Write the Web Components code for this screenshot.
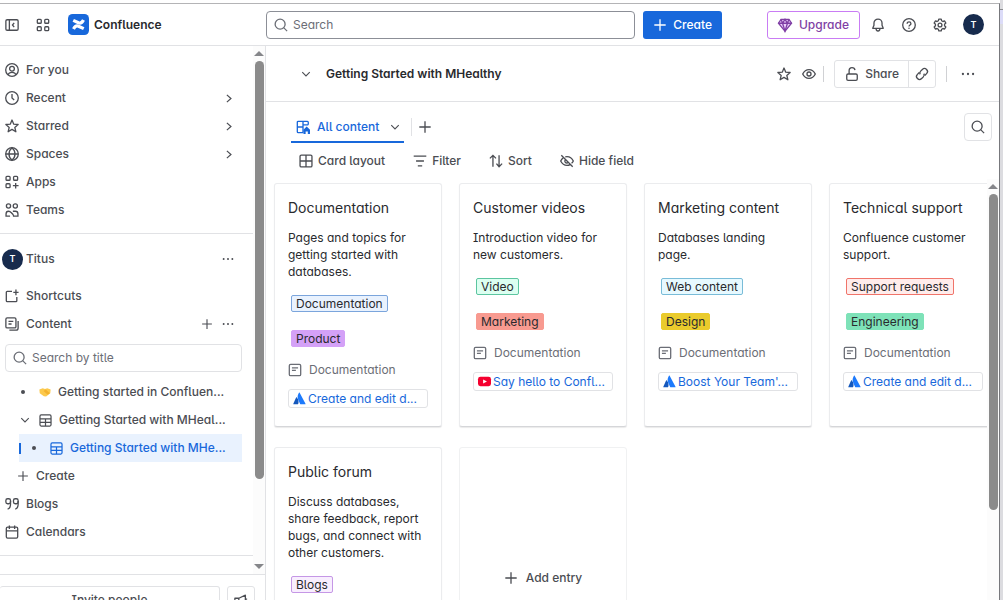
<!DOCTYPE html>
<html lang="en">
<head>
<meta charset="utf-8">
<meta name="viewport" content="width=device-width, initial-scale=1">
<title>Getting Started with MHealthy - Confluence</title>
<style>
  html, body { height: 100%; margin: 0; }
  body {
    --text: #292a2e;
    --subtle: #4b4d53;
    --subtlest: #6b6e76;
    --line: #e1e2e5;
    --brand: #1868db;
    --navy: #172b4d;
    font: 12px/20px Inter, "Noto Sans", sans-serif;
    font-feature-settings: "cv11", "cv08", "cv05";
    color: var(--text);
    background: #fff;
    overflow: hidden;
  }
</style>
</head>
<body>
<app-window></app-window>

<script>
const ICONS = {
  panel: '<rect x="1" y="2" width="14" height="12" rx="1.5"/><path d="M5 2v12M10.500 5.500 8.500 8l2 2.500"/>',
  grid: '<rect x="1.500" y="1.500" width="4.500" height="4.500" rx="1"/><rect x="10" y="1.500" width="4.500" height="4.500" rx="1"/><rect x="1.500" y="10" width="4.500" height="4.500" rx="1"/><rect x="10" y="10" width="4.500" height="4.500" rx="1"/>',
  person: '<circle cx="8" cy="8" r="7.200"/><circle cx="8" cy="6.500" r="2.700"/><path d="M3.500 13.500c.6-2 2-2.800 4.500-2.800s3.900.8 4.500 2.800"/>',
  clock: '<circle cx="8" cy="8" r="7.200"/><path d="M8 3.500V8l2.500 2.200"/>',
  star: '<path d="m8 1.200 2 4.700 5 .4-3.800 3.300 1.200 5L8 11.900l-4.400 2.700 1.200-5L1 6.300l5-.4z" stroke-linejoin="round"/>',
  globe: '<circle cx="8" cy="8" r="7.200"/><path d="M.8 8h14.400M8 .8c-4.600 4-4.600 10.400 0 14.400 4.600-4 4.600-10.400 0-14.400z"/>',
  apps: '<rect x="1.200" y="1.500" width="4.600" height="4.500" rx="1"/><rect x="9.800" y="1.500" width="4.600" height="4.500" rx="1"/><rect x="1.200" y="10" width="4.600" height="4.500" rx="1"/><path d="M12.200 9v6.500M9 12.200h6.500"/>',
  teams: '<circle cx="4" cy="3.400" r="2.400"/><circle cx="11.800" cy="3.400" r="2.400"/><path d="M5.800 15H1.200v-2.500c0-1.900 1.100-3.100 2.900-3.100 1.300 0 2.100.5 2.900 1.500l2.200 2.300c.4.500.6.900.6 1.800h5v-2.500c0-1.900-1.100-3.100-2.900-3.100H9"/>',
  right: '<path d="m6 3.500 5 4.500-5 4.500"/>',
  down: '<path d="m3 5.500 5 5 5-5"/>',
  dots: '<g fill="currentColor" stroke="none"><circle cx="2.200" cy="8" r="1.300"/><circle cx="8" cy="8" r="1.300"/><circle cx="13.800" cy="8" r="1.300"/></g>',
  plus: '<path d="M8 1.500v13M1.500 8h13"/>',
  shortcut: '<path d="M8 2.800H2.500a1 1 0 0 0-1 1v9.700a1 1 0 0 0 1 1h10a1 1 0 0 0 1-1V9M12.500.5v6.500M9.500 3.800h6"/>',
  content: '<rect x="1" y="1" width="11.500" height="11.500" rx="1.500"/><path d="M4 5h5.500M4 8h3.500M15 4.500v8c0 1.500-.9 2.500-2.500 2.500H5"/>',
  search: '<circle cx="7" cy="7" r="5.700"/><path d="m11 11 4 4"/>',
  table: '<rect x="1.200" y="1.200" width="13.600" height="13.600" rx="1.500"/><path d="M1.200 6h13.600M1.200 10.400h13.600M8 6v8.800"/>',
  quote: '<path d="M6.300 4.500v3.700c0 3.200-1.200 5-3.300 5.700M15 4.500v3.700c0 3.200-1.200 5-3.300 5.700"/><rect x="1" y="2" width="5.300" height="5.700" rx="2"/><rect x="9.700" y="2" width="5.300" height="5.700" rx="2"/>',
  calendar: '<rect x="1.500" y="2.500" width="13" height="12.500" rx="1.500"/><path d="M1.500 6.800h13M5 .5v4M11 .5v4"/>',
  bell: '<path d="M8 1.200a4.600 4.600 0 0 0-4.600 4.600v2.400L2 11.800h12l-1.400-3.600V5.800A4.600 4.600 0 0 0 8 1.200zM5.800 12c0 3.800 4.400 3.800 4.400 0" stroke-linejoin="round"/>',
  help: '<circle cx="8" cy="8" r="7.200"/><path d="M5.900 6.600c0-2.900 4.300-2.700 4.300-.1C10.200 8 8 8 8 9.700"/><circle cx="8" cy="11.800" r=".9" fill="currentColor" stroke="none"/>',
  gear: '<path d="M6.600 1.200h2.800l.5 2 1.400.8 2-.6 1.400 2.400-1.500 1.400v1.600l1.500 1.400-1.400 2.400-2-.6-1.400.8-.5 2H6.600l-.5-2-1.400-.8-2 .6-1.400-2.400 1.500-1.400V7.200L1.300 5.800l1.400-2.400 2 .6 1.400-.8z" stroke-linejoin="round"/><circle cx="8" cy="8" r="2.200"/>',
  eye: '<path d="M.8 8C2.500 4.500 5 3 8 3s5.500 1.500 7.200 5C13.500 11.500 11 13 8 13S2.500 11.500.8 8z"/><circle cx="8" cy="8" r="2.300"/>',
  unlock: '<rect x="2" y="8" width="12" height="7.200" rx="1.500"/><path d="M4.700 8V4.200C4.700 2 6 .8 8 .8s3.200 1 3.400 2.700"/>',
  link: '<g transform="rotate(-45 8 8)"><path d="M7 4.600H4a3.400 3.400 0 0 0 0 6.800h2.800c1.500 0 2.500-.9 3-2.200M9 11.400h3a3.400 3.400 0 0 0 0-6.800H9.200c-1.500 0-2.500.9-3 2.200"/></g>',
  view: '<path d="M8 14.500H2.500a1 1 0 0 1-1-1v-11a1 1 0 0 1 1-1h10.500a1 1 0 0 1 1 1V5.500M1.500 8H8M8 1.500v13M8 5.500h6"/><path d="M8.500 11.200 12.200 7.500 16 11.200V16h-2.500v-3h-2.500v3H8.500z" fill="currentColor" stroke="none"/>',
  layout: '<rect x="1.200" y="1.200" width="13.600" height="13.600" rx="1.500"/><path d="M1.200 8h13.600M8 1.200v13.600"/>',
  filter: '<path d="M.8 2.500h14.400M3.500 8h9M5.500 13.500h5"/>',
  sort: '<path d="M4.500 14.500v-13M1 5l3.500-3.500L8 5M11.500 1.500v13M8.500 11l3 3.500 3.500-3.500"/>',
  hide: '<path d="M1.500 1.500l13 13M3.500 4.500C2.300 5.400 1.500 6.600.8 8c1.700 3.500 4.200 5 7.200 5 1.300 0 2.500-.3 3.500-.9M6 3.200C11 2.300 13.800 5 15.200 8c-.5 1-1.200 2-2 2.700M5.800 6.800c-1 2.500 1 4 3 3.300"/>',
  page: '<rect x="1.500" y="1.500" width="13" height="13" rx="1.500"/><path d="M4.500 5.500h7M4.500 8.500h4.500"/>',
  mega: '<path d="M1 6h4.500L13 2.500v12L5.500 11H1zM5.500 6v9.500M13 7h2" stroke-linejoin="round"/>',
  gem: '<path d="M3.500 1.500h9L15.500 6 8 15 .5 6z" fill="#c97cf4" fill-opacity=".35"/><path d="M.5 6h15M3.500 1.500 5.200 6 8 15l2.800-9 1.700-4.500M5.200 6 8 1.500 10.800 6"/>',
  confluence: '<rect width="16" height="16" rx="3.500" fill="#1868db" stroke="none"/><g fill="none" stroke="#fff" stroke-width="2.400"><path d="M4.200 11.400C5.200 9.400 6.200 8.600 8 9.300l4 1.900"/><path d="M11.800 4.600C10.800 6.600 9.800 7.400 8 6.700L4 4.800"/></g>',
  hands: '<g stroke="none"><path d="M.5 4.500 5 3l3 1 3-1 4.500 1.500-.5 5L9.500 14 6.500 13.500 1 9.500z" fill="#fcc94c"/><path d="m6 6.500 3-2 5.500 5-3 2z" fill="#f3b22e"/></g>',
  atlassian: '<g stroke="none"><path d="M4.700 6.800c-.3-.4-.7-.3-.9.100L.4 14.400c-.2.400 0 .7.400.7h4.900c.3 0 .6-.1.700-.4 1.100-2.300.3-6-1.700-7.900z" fill="#1558bc"/><path d="M7.300.9C4.900 4.500 5.400 7.800 6.800 10.600l2 4.100c.2.300.4.400.7.400h5.500c.4 0 .6-.3.400-.7L8.200 1c-.2-.4-.6-.5-.9-.1z" fill="#1d7afc"/></g>',
  youtube: '<rect x="0" y="2.200" width="16" height="11.600" rx="3" fill="#f5002f" stroke="none"/><path d="M6.300 5.400v5.200L11 8z" fill="#fff" stroke="none"/>',
};

/* Registers an element whose shadow root is built from its attributes. */
function component(tag, css, html) {
  customElements.define(tag, class extends HTMLElement {
    constructor() {
      super();
      this.attachShadow({ mode: 'open' });
    }
    connectedCallback() {
      const template = document.createElement('template');
      const body = typeof html === 'function' ? html(this) : html;
      template.innerHTML = `<style>*{box-sizing:border-box}button,input{font:inherit;font-feature-settings:inherit;color:inherit}${css}</style>${body}`;
      this.shadowRoot.replaceChildren(template.content.cloneNode(true));
    }
  });
}
const attr = (el, name) => el.getAttribute(name) || '';

component('ui-icon',
  `:host{display:inline-flex;flex:none;width:var(--icon-size,14px);height:var(--icon-size,14px)}
   svg{width:100%;height:100%;overflow:visible}`,
  el => `<svg viewBox="0 0 16 16" fill="none" stroke="currentColor" stroke-width="1.5" aria-hidden="true">${ICONS[attr(el, 'name')]}</svg>`);

component('icon-button',
  `:host{display:inline-flex;flex:none}
   button{display:grid;place-items:center;width:24px;height:24px;padding:0;border:0;background:none;color:inherit;border-radius:3px}`,
  el => `<button type="button" aria-label="${attr(el, 'label')}"><ui-icon name="${attr(el, 'icon')}"></ui-icon></button>`);

component('user-avatar',
  `:host{display:grid;place-items:center;flex:none;width:21px;height:21px;border-radius:50%;background:var(--navy);color:#fff;font-size:9px;font-weight:600;line-height:12px}`,
  `<slot></slot>`);

component('search-field',
  `:host{display:block;color:var(--subtlest)}
   label{display:flex;align-items:center;gap:5px;height:28px;padding:0 7px;border:1px solid var(--field-line,var(--line));border-radius:4px;background:#fff}
   input{flex:1;min-width:0;padding:0;border:0;outline:0;background:none}
   input::placeholder{color:var(--subtlest);opacity:1}`,
  el => `<label><ui-icon name="search"></ui-icon><input type="search" aria-label="${attr(el, 'label')}" placeholder="${attr(el, 'label')}"></label>`);

component('scroll-rail',
  `:host{display:flex;flex-direction:column;align-items:center;flex:none;width:12px;padding:5px 0;background:#fcfcfc}
   i{border:5px solid transparent;border-top:0;border-bottom:5px solid #85868a}
   i.end{border-bottom:0;border-top:5px solid #85868a}
   div{flex:1;width:9px;margin:5px 0}
   span{display:block;height:var(--thumb,84%);border-radius:5px;background:#8b8b8b}`,
  `<i></i><div><span></span></div><i class="end"></i>`);

component('app-header',
  `:host{display:flex;align-items:center;flex:none;height:42px;border-bottom:1px solid var(--line);color:var(--subtle)}
   .brand{display:flex;align-items:center;width:266px;flex:none}
   .brand icon-button{margin-right:7px}
   .logo{display:flex;align-items:center;gap:5px;margin-left:6px;color:var(--text);font-weight:600;text-decoration:none;--icon-size:21px}
   search-field{flex:1;--field-line:#8c8f97}
   button{display:flex;align-items:center;gap:6px;height:28px;padding:0 10px;border:0;border-radius:3px;font-weight:500}
   .create{margin:0 45px 0 8px;background:var(--brand);color:#fff}
   .upgrade{gap:7px;border:1px solid #c97cf4;background:#fff;color:#803fa5}
   .tools{display:flex;align-items:center;gap:7px;margin:0 15px 0 6px}
   user-avatar{margin-left:4px}`,
  `<div class="brand"><icon-button icon="panel" label="Collapse sidebar"></icon-button><icon-button icon="grid" label="Switch sites"></icon-button>
     <a class="logo" href="#home"><ui-icon name="confluence"></ui-icon>Confluence</a></div>
   <search-field label="Search"></search-field>
   <button class="create" type="button"><ui-icon name="plus"></ui-icon>Create</button>
   <button class="upgrade" type="button"><ui-icon name="gem"></ui-icon>Upgrade</button>
   <div class="tools"><icon-button icon="bell" label="Notifications"></icon-button><icon-button icon="help" label="Help"></icon-button><icon-button icon="gear" label="Settings"></icon-button><user-avatar>T</user-avatar></div>`);

component('nav-item',
  `:host{display:flex;align-items:center;height:28px;padding:0 13px 0 5px;font-weight:500}
   a{display:flex;align-items:center;gap:7px;flex:1;min-width:0;color:inherit;text-decoration:none;white-space:nowrap}
   .more{--icon-size:13px;margin-right:5px}
   slot[name=lead]{display:contents}`,
  el => `<a href="#${attr(el, 'icon')}"><slot name="lead">${el.hasAttribute('icon') ? `<ui-icon name="${attr(el, 'icon')}"></ui-icon>` : ''}</slot><slot></slot></a>
   ${el.hasAttribute('expandable') ? '<ui-icon class="more" name="right"></ui-icon>' : ''}<slot name="actions"></slot>`);

component('tree-item',
  `:host{display:block;padding:0 11px 0 19px;font-weight:500}
   a{display:flex;align-items:center;height:28px;color:inherit;text-decoration:none;white-space:nowrap}
   .mark{display:grid;place-items:center;flex:none;width:8px;--icon-size:12px}
   .bullet{width:4px;height:4px;border-radius:50%;background:var(--subtle)}
   .icon{margin:0 7px 0 12px;--icon-size:13px}
   .bar{flex:none;width:2px;height:11px;background:var(--brand)}
   :host([current]) a{background:#e9f2fe;color:var(--brand)}
   :host([current]) .mark{margin-left:9px}
   :host([leaf]) .icon{--icon-size:12px}`,
  el => `<a href="#page">${el.hasAttribute('current') ? '<span class="bar"></span>' : ''}<span class="mark">${el.hasAttribute('open') ? '<ui-icon name="down"></ui-icon>' : '<span class="bullet"></span>'}</span><ui-icon class="icon" name="${attr(el, 'icon')}"></ui-icon><slot></slot></a>`);

component('side-nav',
  `:host{display:flex;flex-direction:column;flex:none;width:266px;border-right:1px solid var(--line);color:var(--subtle)}
   .scroll{display:flex;flex:1;min-height:0}
   nav{flex:1;min-width:0;padding-top:10px;overflow:hidden}
   hr{height:1px;margin:9px 0 11px;border:0;background:var(--line)}
   .space{margin-bottom:9px}
   .space user-avatar{margin:0 -4px 0 -3px}
   search-field{margin:6px 11px 6px 5px}
   .actions{display:flex;--icon-size:12px}
   .actions icon-button{margin-left:-3px}
   .create{padding-left:17px;--icon-size:12px}
   footer{display:flex;gap:7px;height:26px;flex:none;padding:11px 10px 0 0;border-top:1px solid var(--line);overflow:hidden}
   footer button{display:grid;place-items:center;height:28px;flex:none;padding:0;border:1px solid var(--line);border-radius:3px;background:#fff;font-weight:500}
   footer button:first-child{flex:1;border-left:0}
   footer button:last-child{width:28px}`,
  `<div class="scroll"><nav aria-label="Space">
     <nav-item icon="person">For you</nav-item>
     <nav-item icon="clock" expandable>Recent</nav-item>
     <nav-item icon="star" expandable>Starred</nav-item>
     <nav-item icon="globe" expandable>Spaces</nav-item>
     <nav-item icon="apps">Apps</nav-item>
     <nav-item icon="teams">Teams</nav-item>
     <hr>
     <nav-item class="space"><user-avatar slot="lead">T</user-avatar>Titus<span slot="actions" class="actions"><icon-button icon="dots" label="Space actions"></icon-button></span></nav-item>
     <nav-item icon="shortcut">Shortcuts</nav-item>
     <nav-item icon="content">Content<span slot="actions" class="actions"><icon-button icon="plus" label="Add content"></icon-button><icon-button icon="dots" label="Content actions"></icon-button></span></nav-item>
     <search-field label="Search by title"></search-field>
     <tree-item icon="hands" leaf>Getting started in Confluen...</tree-item>
     <tree-item icon="table" open>Getting Started with MHeal...</tree-item>
     <tree-item icon="table" current>Getting Started with MHe...</tree-item>
     <nav-item class="create"><ui-icon slot="lead" name="plus"></ui-icon>Create</nav-item>
     <nav-item icon="quote">Blogs</nav-item>
     <nav-item icon="calendar">Calendars</nav-item>
     <hr>
     <nav-item icon="table"></nav-item>
   </nav><scroll-rail></scroll-rail></div>
   <footer><button type="button">Invite people</button><button type="button" aria-label="Announcements"><ui-icon name="mega"></ui-icon></button></footer>`);

component('page-header',
  `:host{display:flex;align-items:center;flex:none;height:56px;padding:0 19px 0 28px;border-bottom:1px solid var(--line);color:var(--subtle)}
   h1{flex:1;margin:0 0 0 8px;color:var(--text);font-size:12px;line-height:20px;font-weight:600}
   icon-button.fold{--icon-size:12px}
   .watch{margin:0 2px 0 1px}
   .rule{width:1px;height:16px;background:#d0d1d4}
   .share{display:flex;height:28px;margin:0 10px;border:1px solid var(--line);border-radius:3px}
   .share button{display:flex;align-items:center;gap:6px;padding:0 9px 0 10px;border:0;background:none;font-weight:500}
   .share button + button{padding:0 6px;border-left:1px solid var(--line)}
   .more{margin-left:9px}`,
  `<icon-button class="fold" icon="down" label="Show parents"></icon-button><h1>Getting Started with MHealthy</h1>
   <icon-button icon="star" label="Star"></icon-button><icon-button class="watch" icon="eye" label="Watch"></icon-button>
   <span class="rule"></span>
   <div class="share"><button type="button"><ui-icon name="unlock"></ui-icon>Share</button><button type="button" aria-label="Copy link"><ui-icon name="link"></ui-icon></button></div>
   <span class="rule"></span><icon-button class="more" icon="dots" label="More actions"></icon-button>`);

component('view-tabs',
  `:host{display:flex;align-items:center;flex:none;height:41px;padding:0 7px 0 25px;color:var(--subtle)}
   .tab{display:flex;align-items:center;align-self:stretch;gap:7px;padding:14px 3px 3px 5px;border:0;border-bottom:2px solid var(--brand);background:none;color:var(--brand);font-weight:500}
   .tab .caret{--icon-size:12px;margin-left:3px;color:var(--subtle)}
   .rule{width:1px;height:18px;margin:8px 1px 0 7px;background:var(--line)}
   .add{margin-top:8px}
   .find{margin:8px 0 0 auto;border:1px solid var(--line);border-radius:4px;padding:1px}`,
  `<button class="tab" type="button"><ui-icon name="view"></ui-icon>All content<ui-icon class="caret" name="down"></ui-icon></button>
   <span class="rule"></span><icon-button class="add" icon="plus" label="Add view"></icon-button>
   <icon-button class="find" icon="search" label="Search entries"></icon-button>`);

component('view-tools',
  `:host{display:flex;flex:none;gap:28px;height:40px;padding:8px 0 12px 33px;color:var(--subtle)}
   button{display:flex;align-items:center;gap:5px;padding:0;border:0;background:none;font-weight:500}`,
  `<button type="button"><ui-icon name="layout"></ui-icon>Card layout</button>
   <button type="button"><ui-icon name="filter"></ui-icon>Filter</button>
   <button type="button"><ui-icon name="sort"></ui-icon>Sort</button>
   <button type="button"><ui-icon name="hide"></ui-icon>Hide field</button>`);

const TONES = {
  blue: ['#e9f2fe', '#7ba5dc'], purple: ['#d4a1f7', '#d4a1f7'], mint: ['#dcfff1', '#5cc5a0'], red: ['#f89a90', '#f89a90'],
  sky: ['#e7f9ff', '#79bcd8'], yellow: ['#eacb2c', '#eacb2c'], rose: ['#ffeceb', '#f0746a'], green: ['#7ee2b8', '#7ee2b8'], lilac: ['#f8eefe', '#c597e6'],
};
component('entry-tag',
  `:host{display:block;padding:9px 3px}
   span{display:block;width:fit-content;height:17px;padding:0 4px;border:1px solid;border-radius:2px;line-height:15px}`,
  el => {
    const [fill, edge] = TONES[attr(el, 'tone')];
    return `<span style="background:${fill};border-color:${edge}"><slot></slot></span>`;
  });

component('entry-card',
  `:host{display:block;min-height:244px;padding:14px 13px 18px;border:1px solid #ebecee;border-bottom-color:#d5d6d9;border-radius:3px;background:#fff;box-shadow:0 1px 1px #1e1f2118}
   h2{margin:0 0 11px;font-size:14px;line-height:20px;font-weight:400;white-space:nowrap}
   p{margin:0 0 6px;line-height:17px}
   .type{display:flex;align-items:center;gap:7px;height:20px;margin:4px 0 9px;color:var(--subtlest)}
   .link{display:flex;align-items:center;gap:2px;height:19px;padding:0 4px;border:1px solid var(--line);border-radius:3px;color:var(--brand);text-decoration:none;white-space:nowrap;overflow:hidden;--icon-size:13px}`,
  el => `<h2>${attr(el, 'heading')}</h2><p><slot name="text"></slot></p><slot></slot>
   <div class="type"><ui-icon name="page"></ui-icon>Documentation</div>
   <a class="link" href="#link"><ui-icon name="${attr(el, 'icon') || 'atlassian'}"></ui-icon>${attr(el, 'link')}</a>`);

component('add-card',
  `:host{display:block;border:1px solid #f0f1f2;border-radius:3px}
   button{display:flex;align-items:center;justify-content:center;gap:8px;width:100%;height:260px;padding:0;border:0;background:none;color:var(--subtle);font-weight:500}`,
  `<button type="button"><ui-icon name="plus"></ui-icon>Add entry</button>`);

component('card-board',
  `:host{display:flex;flex:1;min-height:0}
   .grid{flex:1;min-width:0;display:grid;grid-template-columns:repeat(4,168px);gap:20px 17px;align-content:start;padding-left:8px;overflow:hidden}
   scroll-rail{--thumb:77%;margin:-4px 0 -20px}`,
  `<div class="grid"><slot></slot></div><scroll-rail></scroll-rail>`);

component('app-window',
  `:host{display:flex;height:100vh;overflow:hidden}
   .app{flex:1;min-width:0;display:flex;flex-direction:column;border-top:1px solid #b4b4b6;margin-top:3px;border-right:1px solid #77787c}
   .body{display:flex;flex:1;min-height:0}
   main{flex:1;min-width:0;display:flex;flex-direction:column}
   .edge{flex:none;width:3px;padding-top:9px;background:#dcdce0}
   .edge span{display:block;height:15px;border-top:1px solid #8b8c90;background:#dcdcf8}`,
  `<div class="app"><app-header></app-header><div class="body"><side-nav></side-nav>
   <main><page-header></page-header><view-tabs></view-tabs><view-tools></view-tools>
   <card-board>
     <entry-card heading="Documentation" link="Create and edit d..."><span slot="text">Pages and topics for getting started with databases.</span><entry-tag tone="blue">Documentation</entry-tag><entry-tag tone="purple">Product</entry-tag></entry-card>
     <entry-card heading="Customer videos" icon="youtube" link="Say hello to Confl..."><span slot="text">Introduction video for new customers.</span><entry-tag tone="mint">Video</entry-tag><entry-tag tone="red">Marketing</entry-tag></entry-card>
     <entry-card heading="Marketing content" link="Boost Your Team'..."><span slot="text">Databases landing page.</span><entry-tag tone="sky">Web content</entry-tag><entry-tag tone="yellow">Design</entry-tag></entry-card>
     <entry-card heading="Technical support" link="Create and edit d..."><span slot="text">Confluence customer support.</span><entry-tag tone="rose">Support requests</entry-tag><entry-tag tone="green">Engineering</entry-tag></entry-card>
     <entry-card heading="Public forum" link="Create and edit d..."><span slot="text">Discuss databases, share feedback, report bugs, and connect with other customers.</span><entry-tag tone="lilac">Blogs</entry-tag></entry-card>
     <add-card></add-card>
   </card-board></main></div></div>
   <div class="edge"><span></span></div>`);
</script>
</body>
</html>
